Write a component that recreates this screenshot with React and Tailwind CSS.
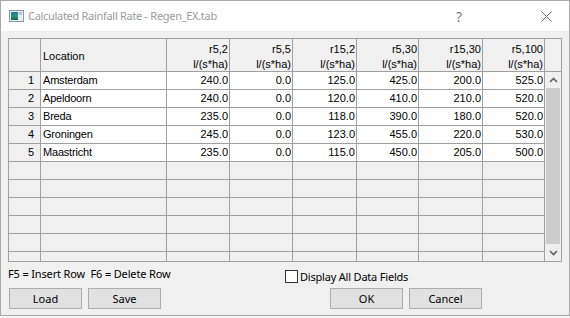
import React from 'react';

const heads = ['r5,2', 'r5,5', 'r15,2', 'r5,30', 'r15,30', 'r5,100'];

const rows = [
  ['Amsterdam', ['240.0', '0.0', '125.0', '425.0', '200.0', '525.0']],
  ['Apeldoorn', ['240.0', '0.0', '120.0', '410.0', '210.0', '520.0']],
  ['Breda', ['235.0', '0.0', '118.0', '390.0', '180.0', '520.0']],
  ['Groningen', ['245.0', '0.0', '123.0', '455.0', '220.0', '530.0']],
  ['Maastricht', ['235.0', '0.0', '115.0', '450.0', '205.0', '500.0']],
];

const Chevron = ({ up }) => (
  <svg width="9" height="6" viewBox="0 0 9 6">
    <path
      d={up ? 'M1 5 L4.5 1.5 L8 5' : 'M1 1 L4.5 4.5 L8 1'}
      fill="none"
      stroke="#606060"
      strokeWidth="1.6"
    />
  </svg>
);

const AppIcon = () => (
  <svg width="15" height="12" viewBox="0 0 15 12">
    <defs>
      <linearGradient id="ig" x1="0" y1="0" x2="0" y2="1">
        <stop offset="0" stopColor="#2c6fa0" />
        <stop offset="0.5" stopColor="#2a9a7a" />
        <stop offset="1" stopColor="#1d5f4e" />
      </linearGradient>
    </defs>
    <rect x="0.5" y="0.5" width="14" height="11" fill="#e8eef2" stroke="#8a9aa6" />
    <rect x="2" y="2" width="7" height="8" fill="url(#ig)" />
    <rect x="10" y="2" width="3" height="3" fill="#b8c6d0" />
  </svg>
);

export default function App() {
  // empty rows under the 5 data rows (5 full + 1 cut off)
  const empties = [17, 17, 17, 17, 17, 9];

  return (
    <div className="w-[570px] h-[318px] bg-[#f7f7f7] overflow-hidden">
      <div className="w-[570px] h-[316px] border border-[#a9a9a9] bg-[#f0f0f0] flex flex-col font-['Noto_Sans',sans-serif] text-[11px] text-black">
        {/* Title bar */}
        <div className="h-[30px] bg-white flex items-center pl-[8px] pr-[17px]">
          <AppIcon />
          <span className="ml-[4px] text-[#9b9b9b] text-[11px] tracking-[-0.3px]">
            Calculated Rainfall Rate - Regen_EX.tab
          </span>
          <span className="ml-auto text-[#7a7a7a] text-[14px]">?</span>
          <svg className="ml-[79px]" width="11" height="11" viewBox="0 0 11 11">
            <path d="M0.5 0.5 L10.5 10.5 M10.5 0.5 L0.5 10.5" stroke="#6a6a6a" strokeWidth="1" />
          </svg>
        </div>

        {/* Body */}
        <div className="flex-1 flex flex-col px-[7px] pt-[7px]">
          {/* Grid */}
          <div className="grid grid-cols-[31px_125px_62px_62px_63px_61px_63px_61px_16px] grid-rows-[32px_repeat(10,17px)_9px] gap-px p-px bg-[#a0a0a0] font-['Liberation_Sans',Arial,sans-serif] text-[11px] leading-[13px]">
            {/* scrollbar */}
            <div className="col-start-9 row-start-2 row-end-13 bg-[#f0f0f0] flex flex-col">
              <div className="h-[16px] flex items-center justify-center">
                <Chevron up />
              </div>
              <div className="flex-1 mx-[1px] bg-[#cdcdcd]" />
              <div className="h-[17px] flex items-center justify-center">
                <Chevron />
              </div>
            </div>

            {/* header row */}
            <div className="bg-[#f0f0f0]" />
            <div className="bg-[#f0f0f0] flex items-center pl-[2px] pt-[3px]">Location</div>
            {heads.map((h) => (
              <div key={h} className="bg-[#f0f0f0] flex flex-col items-end justify-center pr-px pt-[4px] leading-[15px]">
                <span>{h}</span>
                <span>l/(s*ha)</span>
              </div>
            ))}
            <div className="bg-[#f0f0f0]" />

            {/* data rows */}
            {rows.map(([name, vals], i) => (
              <React.Fragment key={name}>
                <div className="bg-[#f0f0f0] flex items-center justify-end pr-[6px]">{i + 1}</div>
                <div className="bg-white flex items-center pl-[2px] tracking-[-0.2px]">{name}</div>
                {vals.map((v, j) => (
                  <div key={j} className="bg-white flex items-center justify-end pr-px">
                    {v}
                  </div>
                ))}
              </React.Fragment>
            ))}

            {/* empty rows */}
            {empties.map((h, i) =>
              Array.from({ length: 8 }).map((_, j) => (
                <div key={`${i}-${j}`} className="bg-[#f0f0f0]" />
              ))
            )}
          </div>

          {/* Status line */}
          <div className="flex items-start mt-[2px] h-[24px]">
            <span className="w-[277px] leading-[16px] mt-[2px] tracking-[-0.15px]">F5 = Insert Row&nbsp; F6 = Delete Row</span>
            <label className="flex items-center mt-[6px]">
              <span className="w-[13px] h-[13px] border border-[#333] bg-white" />
              <span className="ml-[2px] leading-[13px] tracking-[-0.2px]">Display All Data Fields</span>
            </label>
          </div>

          {/* Buttons */}
          <div className="flex">
            <button className="w-[73px] h-[21px] ml-[1px] bg-[#e1e1e1] border border-[#adadad] leading-[18px]">Load</button>
            <button className="w-[73px] h-[21px] ml-[6px] bg-[#e1e1e1] border border-[#adadad] leading-[18px]">Save</button>
            <button className="w-[73px] h-[21px] ml-[169px] bg-[#e1e1e1] border border-[#adadad] leading-[18px]">OK</button>
            <button className="w-[73px] h-[21px] ml-[6px] bg-[#e1e1e1] border border-[#adadad] leading-[18px]">Cancel</button>
          </div>
        </div>
      </div>
    </div>
  );
}
